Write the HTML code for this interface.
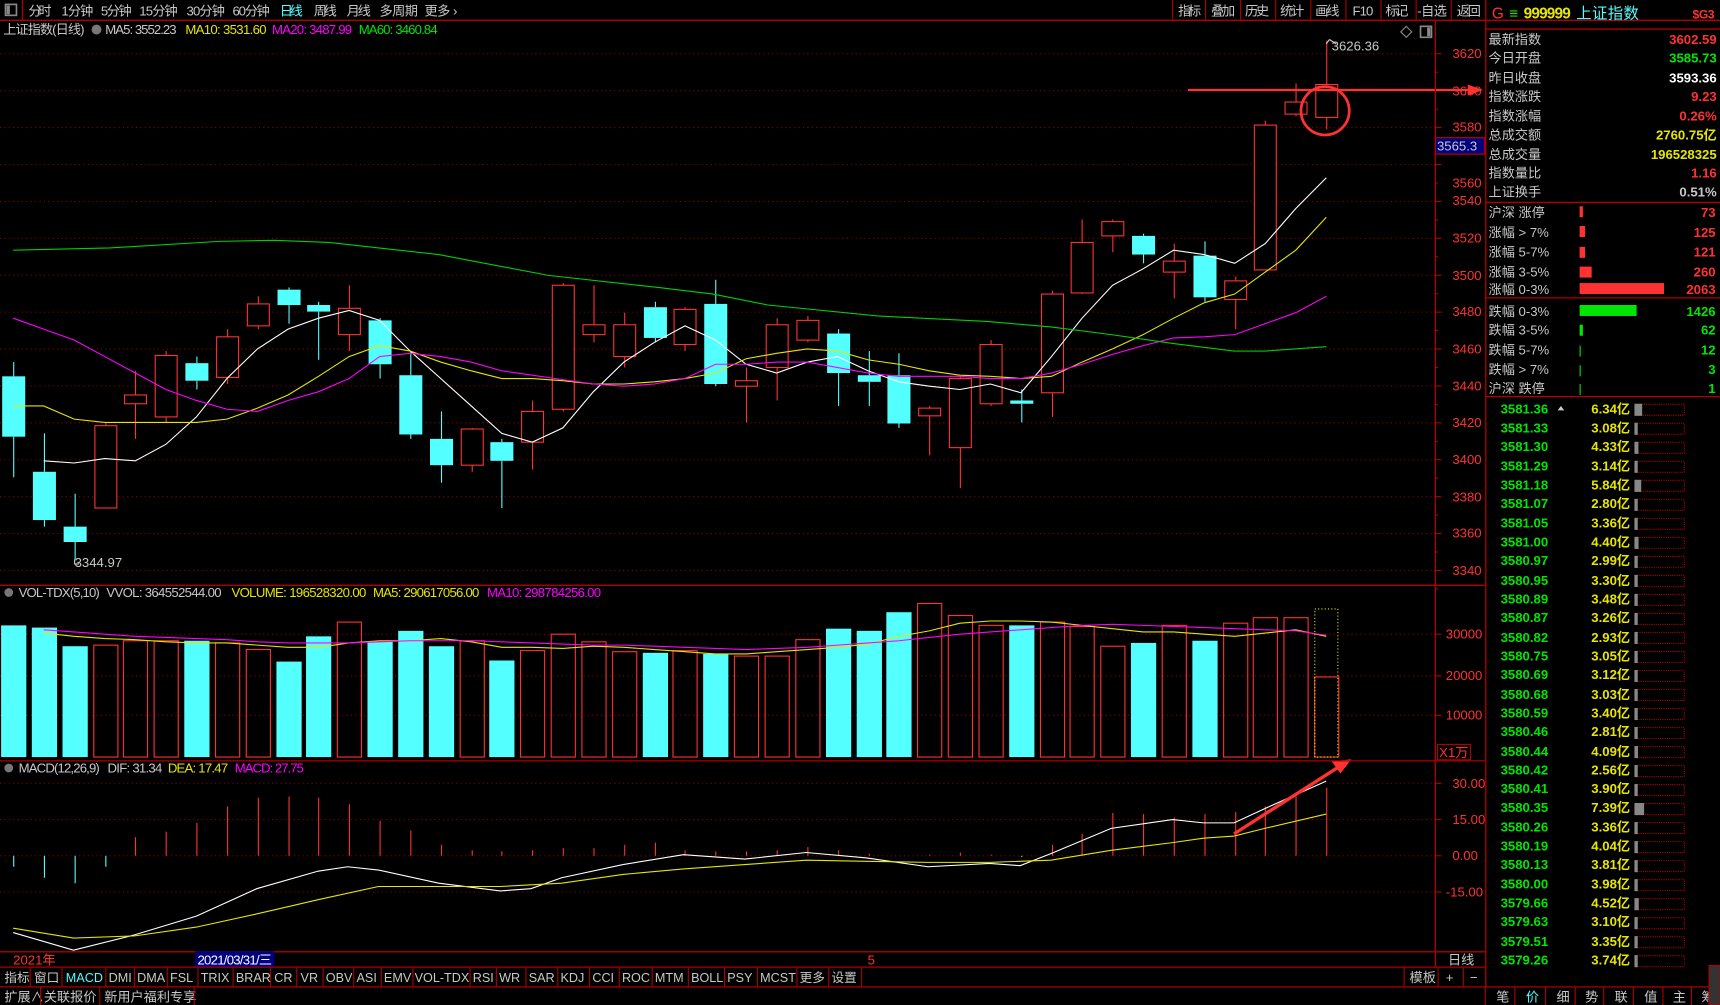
<!DOCTYPE html>
<html><head><meta charset="utf-8"><style>
html,body{margin:0;padding:0;background:#000;width:1720px;height:1005px;overflow:hidden}
svg{display:block}
text{font-family:"Liberation Sans","Noto Sans CJK SC",sans-serif;font-size:12px}
.w{fill:#c8c8c8}.r{fill:#ff3232}.g{fill:#00e600}.y{fill:#e6e600}.c{fill:#54ffff}.m{fill:#ff00ff}
.big{font-size:14px}
</style></head><body>
<svg id="s" width="1720" height="1005" viewBox="0 0 1568 916" preserveAspectRatio="none" xmlns="http://www.w3.org/2000/svg">
<rect width="1568" height="916" fill="#000"/>
<g id="grid"></g>
<g id="gfx"></g>
<g stroke="#b00000" stroke-width="1.2" fill="none">
<line x1="0" y1="18.5" x2="1568" y2="18.5"/>
<line x1="0" y1="533.5" x2="1354" y2="533.5"/>
<line x1="0" y1="693.5" x2="1354" y2="693.5"/>
<line x1="0" y1="867.5" x2="1354" y2="867.5"/>
<line x1="0" y1="881.5" x2="1354" y2="881.5"/>
<line x1="0" y1="899.5" x2="1568" y2="899.5"/>
<line x1="1308.5" y1="19" x2="1308.5" y2="881"/>
<line x1="1354.5" y1="0" x2="1354.5" y2="899"/>
<line x1="1354" y1="26.5" x2="1568" y2="26.5"/>
<line x1="1354" y1="184.5" x2="1568" y2="184.5"/>
<line x1="1354" y1="271.5" x2="1568" y2="271.5"/>
<line x1="1354" y1="361.5" x2="1568" y2="361.5"/>
<line x1="20.5" y1="0" x2="20.5" y2="18"/>
<rect x="1308.5" y="125.5" width="45" height="15" fill="#000080" stroke="#b00000"/>
</g>
<!-- top bar -->
<rect x="5" y="4" width="10" height="10" fill="none" stroke="#888" stroke-width="1.5"/><rect x="6" y="5" width="3" height="8" fill="#888"/>
<g class="w" font-size="12">
<text x="26" y="14" textLength="21">分时</text><text x="56" y="14" textLength="29">1分钟</text><text x="92" y="14" textLength="28">5分钟</text><text x="127" y="14" textLength="35">15分钟</text><text x="170" y="14" textLength="35">30分钟</text><text x="212" y="14" textLength="34">60分钟</text><text x="255" y="14" textLength="21" style="fill:#54ffff">日线</text><text x="286" y="14" textLength="21">周线</text><text x="316" y="14" textLength="22">月线</text><text x="346" y="14" textLength="35">多周期</text><text x="387" y="14" textLength="30">更多 ›</text>
</g>
<g stroke="#b00000" stroke-width="1"><line x1="1069" y1="0" x2="1069" y2="18"/><line x1="1099" y1="0" x2="1099" y2="18"/><line x1="1131" y1="0" x2="1131" y2="18"/><line x1="1163" y1="0" x2="1163" y2="18"/><line x1="1195" y1="0" x2="1195" y2="18"/><line x1="1227" y1="0" x2="1227" y2="18"/><line x1="1259" y1="0" x2="1259" y2="18"/><line x1="1291" y1="0" x2="1291" y2="18"/><line x1="1323" y1="0" x2="1323" y2="18"/></g>
<g class="w" font-size="12">
<text x="1074" y="14" textLength="21">指标</text><text x="1104" y="14" textLength="22">叠加</text><text x="1135" y="14" textLength="22">历史</text><text x="1167" y="14" textLength="22">统计</text><text x="1199" y="14" textLength="22">画线</text><text x="1233" y="14" textLength="19">F10</text><text x="1263" y="14" textLength="21">标记</text><text x="1292" y="14" textLength="27">-自选</text><text x="1328" y="14" textLength="22">返回</text>
</g>
<!-- main header -->
<g font-size="12">
<text x="3" y="31" textLength="74" class="w">上证指数(日线)</text>
<text x="96" y="31" textLength="65" class="w">MA5: 3552.23</text>
<text x="169" y="31" textLength="74" class="y">MA10: 3531.60</text>
<text x="248" y="31" textLength="73" class="m">MA20: 3487.99</text>
<text x="327" y="31" textLength="72" class="g">MA60: 3460.84</text>
</g>
<circle cx="88" cy="27" r="4.5" fill="#777"/>
<text x="1214" y="46" class="w" font-size="11">3626.36</text>
<text x="68" y="517" class="w" font-size="11">3344.97</text>
<path d="M1282 24 l5 5 -5 5 -5 -5z" fill="none" stroke="#888"/>
<rect x="1295" y="24" width="10" height="10" fill="none" stroke="#888" stroke-width="1.5"/><rect x="1301" y="25" width="3" height="8" fill="#888"/>
<g class="r"><text x="1324" y="53">3620</text><text x="1324" y="87">3600</text><text x="1324" y="120">3580</text><text x="1324" y="171">3560</text><text x="1324" y="187">3540</text><text x="1324" y="221">3520</text><text x="1324" y="255">3500</text><text x="1324" y="288">3480</text><text x="1324" y="322">3460</text><text x="1324" y="356">3440</text><text x="1324" y="389">3420</text><text x="1324" y="423">3400</text><text x="1324" y="457">3380</text><text x="1324" y="490">3360</text><text x="1324" y="524">3340</text></g>
<text x="1310" y="137" class="w">3565.3</text>
<!-- vol panel -->
<circle cx="8" cy="540" r="4" fill="#777"/>
<g font-size="11.5">
<text x="17" y="544" textLength="74" class="w">VOL-TDX(5,10)</text>
<text x="97" y="544" textLength="105" class="w">VVOL: 364552544.00</text>
<text x="211" y="544" textLength="123" class="y">VOLUME: 196528320.00</text>
<text x="340" y="544" textLength="97" class="y">MA5: 290617056.00</text>
<text x="444" y="544" textLength="104" class="m">MA10: 298784256.00</text>
</g>
<g class="r"><text x="1318" y="582">30000</text><text x="1318" y="620">20000</text><text x="1318" y="656">10000</text></g>
<rect x="1310.5" y="678.5" width="30" height="14" fill="none" stroke="#b00000"/>
<text x="1312" y="690" class="r">X1万</text>
<!-- macd panel -->
<circle cx="8" cy="700" r="4" fill="#777"/>
<g font-size="11.5">
<text x="17" y="704" textLength="74" class="w">MACD(12,26,9)</text>
<text x="98" y="704" textLength="50" class="w">DIF: 31.34</text>
<text x="153" y="704" textLength="55" class="y">DEA: 17.47</text>
<text x="214" y="704" textLength="63" class="m">MACD: 27.75</text>
</g>
<g class="r"><text x="1324" y="718">30.00</text><text x="1324" y="751">15.00</text><text x="1324" y="784">0.00</text><text x="1318" y="817">-15.00</text></g>
<!-- date axis -->
<text x="12" y="879" class="r">2021年</text>
<rect x="178" y="867" width="72" height="14" fill="#000080"/>
<text x="180" y="879" style="fill:#fff" textLength="68">2021/03/31/三</text>
<text x="791" y="879" class="r">5</text>
<text x="1320" y="879" class="w">日线</text>
<g id="tabs"></g>
<text x="1285" y="895" class="w">模板</text><text x="1318" y="895" class="w">+</text><text x="1340" y="895" class="w">−</text>
<g stroke="#b00000"><line x1="1280" y1="882" x2="1280" y2="899"/><line x1="1311" y1="882" x2="1311" y2="899"/><line x1="1334" y1="882" x2="1334" y2="899"/></g>
<text y="913" class="w"><tspan x="4">扩展∧</tspan><tspan x="40">关联报价</tspan><tspan x="95">新用户福利专享</tspan></text>
<g stroke="#b00000"><line x1="37" y1="900" x2="37" y2="916"/><line x1="91" y1="900" x2="91" y2="916"/><line x1="177" y1="900" x2="177" y2="916"/><line x1="1354" y1="900" x2="1354" y2="916"/></g>
<text y="913" class="w"><tspan x="1364">笔</tspan><tspan x="1391" style="fill:#54ffff">价</tspan><tspan x="1419">细</tspan><tspan x="1445">势</tspan><tspan x="1472">联</tspan><tspan x="1499">值</tspan><tspan x="1525">主</tspan><tspan x="1551">筹</tspan></text>
<g stroke="#b00000"><line x1="1381" y1="900" x2="1381" y2="916"/><line x1="1409" y1="900" x2="1409" y2="916"/><line x1="1436" y1="900" x2="1436" y2="916"/><line x1="1462" y1="900" x2="1462" y2="916"/><line x1="1489" y1="900" x2="1489" y2="916"/><line x1="1516" y1="900" x2="1516" y2="916"/><line x1="1542" y1="900" x2="1542" y2="916"/></g>
<rect x="1558" y="880" width="10" height="36" fill="#333" stroke="#b00000"/>
<!-- right panel -->
<text x="1360" y="17" class="r big">G</text>
<text x="1376" y="17" class="g big">≡</text>
<text x="1389" y="17" class="y big" style="font-weight:bold" textLength="43">999999</text>
<text x="1437" y="17" class="c big" textLength="57">上证指数</text>
<text x="1543" y="17" class="r" style="font-size:11px;font-weight:bold" textLength="20">$G3</text>
<g class="w big">
<text x="1357" y="40">最新指数</text><text x="1357" y="57">今日开盘</text><text x="1357" y="75">昨日收盘</text><text x="1357" y="92">指数涨跌</text><text x="1357" y="110">指数涨幅</text><text x="1357" y="127">总成交额</text><text x="1357" y="145">总成交量</text><text x="1357" y="162">指数量比</text><text x="1357" y="179">上证换手</text>
</g>
<g text-anchor="end" style="font-weight:bold" font-size="13">
<text x="1565" y="40" class="r">3602.59</text><text x="1565" y="57" class="g">3585.73</text><text x="1565" y="75" style="fill:#fff">3593.36</text><text x="1565" y="92" class="r">9.23</text><text x="1565" y="110" class="r">0.26%</text><text x="1565" y="127" class="y">2760.75亿</text><text x="1565" y="145" class="y">196528325</text><text x="1565" y="162" class="r">1.16</text><text x="1565" y="179" class="w">0.51%</text>
</g>
<g class="w big">
<text x="1357" y="198">沪深 涨停</text><text x="1357" y="216">涨幅 &gt; 7%</text><text x="1357" y="234">涨幅 5-7%</text><text x="1357" y="252">涨幅 3-5%</text><text x="1357" y="268">涨幅 0-3%</text>
<text x="1357" y="288">跌幅 0-3%</text><text x="1357" y="305">跌幅 3-5%</text><text x="1357" y="323">跌幅 5-7%</text><text x="1357" y="341">跌幅 &gt; 7%</text><text x="1357" y="358">沪深 跌停</text>
</g>
<g fill="#ff3232"><rect x="1440" y="188" width="3" height="10"/><rect x="1440" y="206" width="5" height="10"/><rect x="1440" y="225" width="5" height="10"/><rect x="1440" y="243" width="11" height="10"/><rect x="1440" y="258" width="77" height="10"/></g>
<g fill="#00e600"><rect x="1440" y="278" width="52" height="10"/><rect x="1440" y="296" width="3" height="10"/><rect x="1440" y="315" width="1" height="10"/><rect x="1440" y="333" width="1" height="10"/><rect x="1440" y="350" width="1" height="10"/></g>
<g text-anchor="end" style="font-weight:bold" font-size="13">
<text x="1564" y="198" class="r">73</text><text x="1564" y="216" class="r">125</text><text x="1564" y="234" class="r">121</text><text x="1564" y="252" class="r">260</text><text x="1564" y="268" class="r">2063</text>
<text x="1564" y="288" class="g">1426</text><text x="1564" y="305" class="g">62</text><text x="1564" y="323" class="g">12</text><text x="1564" y="341" class="g">3</text><text x="1564" y="358" class="g">1</text>
</g>
<g id="book"></g>
<g font-size="12.5" style="font-weight:bold">
<text x="1368" y="377" class="g">3581.36</text><text x="1368" y="394" class="g">3581.33</text><text x="1368" y="411" class="g">3581.30</text><text x="1368" y="429" class="g">3581.29</text><text x="1368" y="446" class="g">3581.18</text><text x="1368" y="463" class="g">3581.07</text><text x="1368" y="481" class="g">3581.05</text><text x="1368" y="498" class="g">3581.00</text><text x="1368" y="515" class="g">3580.97</text><text x="1368" y="533" class="g">3580.95</text><text x="1368" y="550" class="g">3580.89</text><text x="1368" y="567" class="g">3580.87</text><text x="1368" y="585" class="g">3580.82</text><text x="1368" y="602" class="g">3580.75</text><text x="1368" y="619" class="g">3580.69</text><text x="1368" y="637" class="g">3580.68</text><text x="1368" y="654" class="g">3580.59</text><text x="1368" y="671" class="g">3580.46</text><text x="1368" y="689" class="g">3580.44</text><text x="1368" y="706" class="g">3580.42</text><text x="1368" y="723" class="g">3580.41</text><text x="1368" y="740" class="g">3580.35</text><text x="1368" y="758" class="g">3580.26</text><text x="1368" y="775" class="g">3580.19</text><text x="1368" y="792" class="g">3580.13</text><text x="1368" y="810" class="g">3580.00</text><text x="1368" y="827" class="g">3579.66</text><text x="1368" y="844" class="g">3579.63</text><text x="1368" y="862" class="g">3579.51</text><text x="1368" y="879" class="g">3579.26</text>
</g>
<g font-size="12.5" style="font-weight:bold" text-anchor="end">
<text x="1486" y="377" class="y">6.34亿</text><text x="1486" y="394" class="y">3.08亿</text><text x="1486" y="411" class="y">4.33亿</text><text x="1486" y="429" class="y">3.14亿</text><text x="1486" y="446" class="y">5.84亿</text><text x="1486" y="463" class="y">2.80亿</text><text x="1486" y="481" class="y">3.36亿</text><text x="1486" y="498" class="y">4.40亿</text><text x="1486" y="515" class="y">2.99亿</text><text x="1486" y="533" class="y">3.30亿</text><text x="1486" y="550" class="y">3.48亿</text><text x="1486" y="567" class="y">3.26亿</text><text x="1486" y="585" class="y">2.93亿</text><text x="1486" y="602" class="y">3.05亿</text><text x="1486" y="619" class="y">3.12亿</text><text x="1486" y="637" class="y">3.03亿</text><text x="1486" y="654" class="y">3.40亿</text><text x="1486" y="671" class="y">2.81亿</text><text x="1486" y="689" class="y">4.09亿</text><text x="1486" y="706" class="y">2.56亿</text><text x="1486" y="723" class="y">3.90亿</text><text x="1486" y="740" class="y">7.39亿</text><text x="1486" y="758" class="y">3.36亿</text><text x="1486" y="775" class="y">4.04亿</text><text x="1486" y="792" class="y">3.81亿</text><text x="1486" y="810" class="y">3.98亿</text><text x="1486" y="827" class="y">4.52亿</text><text x="1486" y="844" class="y">3.10亿</text><text x="1486" y="862" class="y">3.35亿</text><text x="1486" y="879" class="y">3.74亿</text>
</g>
<path d="M1420 374 l3 -4 3 4z" fill="#ccc"/>
<text y="895" style="fill:#c8c8c8;font-size:11.5px"><tspan x="4">指标</tspan><tspan x="31">窗口</tspan><tspan x="60" style="fill:#54ffff">MACD</tspan><tspan x="99">DMI</tspan><tspan x="125">DMA</tspan><tspan x="155">FSL</tspan><tspan x="183">TRIX</tspan><tspan x="215">BRAR</tspan><tspan x="250">CR</tspan><tspan x="274">VR</tspan><tspan x="297">OBV</tspan><tspan x="325">ASI</tspan><tspan x="350">EMV</tspan><tspan x="378">VOL-TDX</tspan><tspan x="431">RSI</tspan><tspan x="455">WR</tspan><tspan x="482">SAR</tspan><tspan x="511">KDJ</tspan><tspan x="540">CCI</tspan><tspan x="567">ROC</tspan><tspan x="597">MTM</tspan><tspan x="630">BOLL</tspan><tspan x="663">PSY</tspan><tspan x="693">MCST</tspan><tspan x="729">更多</tspan><tspan x="758">设置</tspan></text>
</svg>
<script>
var NS="http://www.w3.org/2000/svg";
function el(p,t,a){var e=document.createElementNS(NS,t);for(var k in a)e.setAttribute(k,a[k]);p.appendChild(e);return e;}
var grid=document.getElementById('grid'),g=document.getElementById('gfx');
for(var p=3620;p>=3340;p-=20){var y=49+(3620-p)*1.682;el(grid,'line',{x1:0,x2:1308,y1:y,y2:y,stroke:'#8a0000','stroke-dasharray':'1 3'});el(grid,'line',{x1:1308,x2:1314,y1:y,y2:y,stroke:'#b00000'});el(grid,'line',{x1:1308,x2:1311,y1:y+16.8,y2:y+16.8,stroke:'#b00000'});}
[578,616,652].forEach(function(y){el(grid,'line',{x1:0,x2:1308,y1:y,y2:y,stroke:'#8a0000','stroke-dasharray':'1 3'});el(grid,'line',{x1:1308,x2:1314,y1:y,y2:y,stroke:'#b00000'});});
[714,747,780,813].forEach(function(y){el(grid,'line',{x1:0,x2:1308,y1:y,y2:y,stroke:'#8a0000','stroke-dasharray':'1 3'});el(grid,'line',{x1:1308,x2:1314,y1:y,y2:y,stroke:'#b00000'});});
var C=[[343,398,330,435,'c'],[430,474,395,480,'c'],[480,494,450,510,'c'],[388,463,385,463,'r'],[360,368,338,400,'r'],[324,380,320,385,'r'],[331,347,325,355,'c'],[307,344,300,350,'r'],[277,297,270,300,'r'],[264,278,262,295,'c'],[278,284,275,328,'c'],[281,305,260,320,'r'],[292,332,290,345,'c'],[342,396,320,400,'c'],[400,424,375,440,'c'],[391,424,390,430,'r'],[403,420,400,463,'c'],[375,403,365,428,'r'],[260,373,258,375,'r'],[296,305,260,312,'r'],[296,325,285,335,'r'],[280,308,275,312,'c'],[282,314,280,320,'r'],[277,350,255,352,'c'],[347,352,335,385,'r'],[296,335,290,365,'r'],[292,310,288,312,'r'],[304,340,300,370,'c'],[342,348,320,370,'c'],[342,386,322,390,'c'],[372,379,370,415,'r'],[345,408,343,445,'r'],[314,368,310,370,'r'],[365,368,355,385,'c'],[268,358,265,380,'r'],[221,267,200,268,'r'],[202,215,200,230,'r'],[215,232,213,240,'c'],[238,248,222,272,'r'],[233,271,220,275,'c'],[256,273,252,300,'r'],[114,246,110,246,'r'],[93,104,76,106,'r'],[77,107,37,118,'r']];
function X(i){return 12+27.84*i;}
C.forEach(function(c,i){var x=Math.round(X(i))+.5;var col=c[4]=='c'?'#54ffff':'#ff3232';
el(g,'line',{x1:x,x2:x,y1:c[2],y2:c[0],stroke:col});el(g,'line',{x1:x,x2:x,y1:c[1],y2:c[3],stroke:col});
if(c[4]=='c')el(g,'rect',{x:x-10.5,y:c[0],width:21,height:Math.max(2,c[1]-c[0]),fill:col});
else el(g,'rect',{x:x-10,y:c[0],width:20,height:Math.max(1,c[1]-c[0]),fill:'#000',stroke:col});});
function pl(pts,col,w){el(g,'polyline',{points:pts.map(function(p){return p.join(',')}).join(' '),fill:'none',stroke:col,'stroke-width':w||1});}
function byIdx(a){return a.map(function(v,i){return [X(i),v];});}
pl(byIdx([398,420,422,418,420,405,380,345,318,300,290,283,292,320,345,370,395,403,390,357,330,312,297,310,332,340,330,325,338,348,352,355,350,358,325,290,260,245,228,232,240,222,190,162]).slice(1),'#fff');
pl(byIdx([370,370,382,385,385,385,385,382,372,360,343,325,315,320,330,338,345,345,347,350,350,348,345,340,327,322,318,320,328,332,338,342,343,345,343,330,318,305,290,276,268,248,228,198]),'#e6e600');
pl(byIdx([290,300,310,325,340,355,365,373,375,365,357,345,325,322,325,330,338,342,346,350,352,350,345,332,332,330,330,335,340,343,343,343,345,345,340,332,323,315,308,307,305,295,285,270]),'#ff00ff');
pl([[12,228],[100,226],[200,220],[250,219],[300,221],[400,232],[500,251],[600,262],[650,268],[700,278],[800,288],[900,293],[958,298],[1013,305],[1069,313],[1125,320],[1153,320],[1209,316]],'#00d000');
el(g,'ellipse',{cx:1208,cy:101,rx:22,ry:22,fill:'none',stroke:'#ff3232','stroke-width':2.5});
el(g,'line',{x1:1083,y1:82,x2:1340,y2:82,stroke:'#ff3232','stroke-width':2});
el(g,'path',{d:'M1338 77 L1352 82 L1338 87z',fill:'#ff3232'});
el(g,'path',{d:'M1212 36 l-3 4 M1212 36 l6 4',stroke:'#ccc',fill:'none'});
el(g,'path',{d:'M68 510 v4 h4',stroke:'#ccc',fill:'none'});
var V=[570,572,589,588,584,584,584,586,592,603,580,567,585,575,589,584,602,593,578,585,594,595,593,596,598,598,583,573,575,558,550,561,570,570,567,571,589,586,570,584,568,563,563,617];
V.forEach(function(t,i){var x=Math.round(X(i))+.5,col=C[i][4]=='c'?'#54ffff':'#ff3232';
if(C[i][4]=='c')el(g,'rect',{x:x-11.5,y:t,width:23,height:690-t,fill:col});else el(g,'rect',{x:x-11,y:t,width:22,height:690-t,fill:'none',stroke:col});});
el(g,'rect',{x:X(43)-10.5,y:555,width:21,height:135,fill:'none',stroke:'#e6e600','stroke-dasharray':'1 2'});
pl(byIdx([575,577,580,582,583,585,586,586,588,590,590,586,584,584,582,585,590,590,591,589,590,592,594,596,596,594,592,590,587,580,575,568,566,566,567,570,573,576,576,578,580,577,574,580]).slice(1),'#e6e600');
pl(byIdx([572,574,576,578,580,581,582,583,585,586,586,586,585,584,584,584,585,586,587,588,588,589,590,591,592,591,590,588,586,584,581,578,576,574,572,570,569,570,571,572,573,574,575,579]).slice(1),'#ff00ff');
var M=[790,800,805,790,763,758,750,735,727,726,727,733,748,757,770,775,776,775,773,773,770,768,775,776,776,775,772,775,778,780,779,777,779,781,770,760,741,742,745,742,740,735,725,718];
M.forEach(function(t,i){var x=Math.round(X(i))+.5;el(g,'line',{x1:x,x2:x,y1:780,y2:t,stroke:t>780?'#54ffff':'#ff3232'});});
pl([[12,850],[67,866],[123,852],[179,835],[234,810],[290,794],[317,790],[345,793],[400,805],[456,812],[484,810],[512,800],[568,788],[623,779],[679,783],[735,777],[790,782],[846,790],[902,787],[930,789],[958,778],[1013,755],[1069,747],[1097,750],[1125,750],[1153,737],[1209,712]],'#fff');
pl([[12,846],[67,855],[123,853],[179,845],[234,833],[290,820],[345,808],[400,808],[456,808],[512,805],[568,797],[623,792],[679,788],[735,784],[790,785],[846,786],[902,786],[958,784],[1013,775],[1069,768],[1097,764],[1125,762],[1153,755],[1209,742]],'#e6e600');
el(g,'line',{x1:1125,y1:760,x2:1222,y2:698,stroke:'#ff3232','stroke-width':3});
el(g,'path',{d:'M1214 694 L1232 692 L1222 705z',fill:'#ff3232'});
var T=[27,56,96,122,152,180,212,246,270,294,322,347,376,428,452,479,508,537,564,594,627,660,690,726,755,785];
var tg=document.getElementById('tabs');
T.forEach(function(t){el(tg,'line',{x1:t+.5,x2:t+.5,y1:882,y2:899,stroke:'#b00000'});});
var B=[6.34,3.08,4.33,3.14,5.84,2.80,3.36,4.40,2.99,3.30,3.48,3.26,2.93,3.05,3.12,3.03,3.40,2.81,4.09,2.56,3.90,7.39,3.36,4.04,3.81,3.98,4.52,3.10,3.35,3.74];
var bk=document.getElementById('book');
B.forEach(function(v,i){var y=368+i*17.33;el(bk,'rect',{x:1490.5,y:y+.5,width:45,height:10,fill:'none',stroke:'#b00000','stroke-dasharray':'1 1'});el(bk,'rect',{x:1490,y:y,width:Math.max(3,(v-2.2)*1.7),height:11,fill:'#888'});});
</script>
</body></html>
